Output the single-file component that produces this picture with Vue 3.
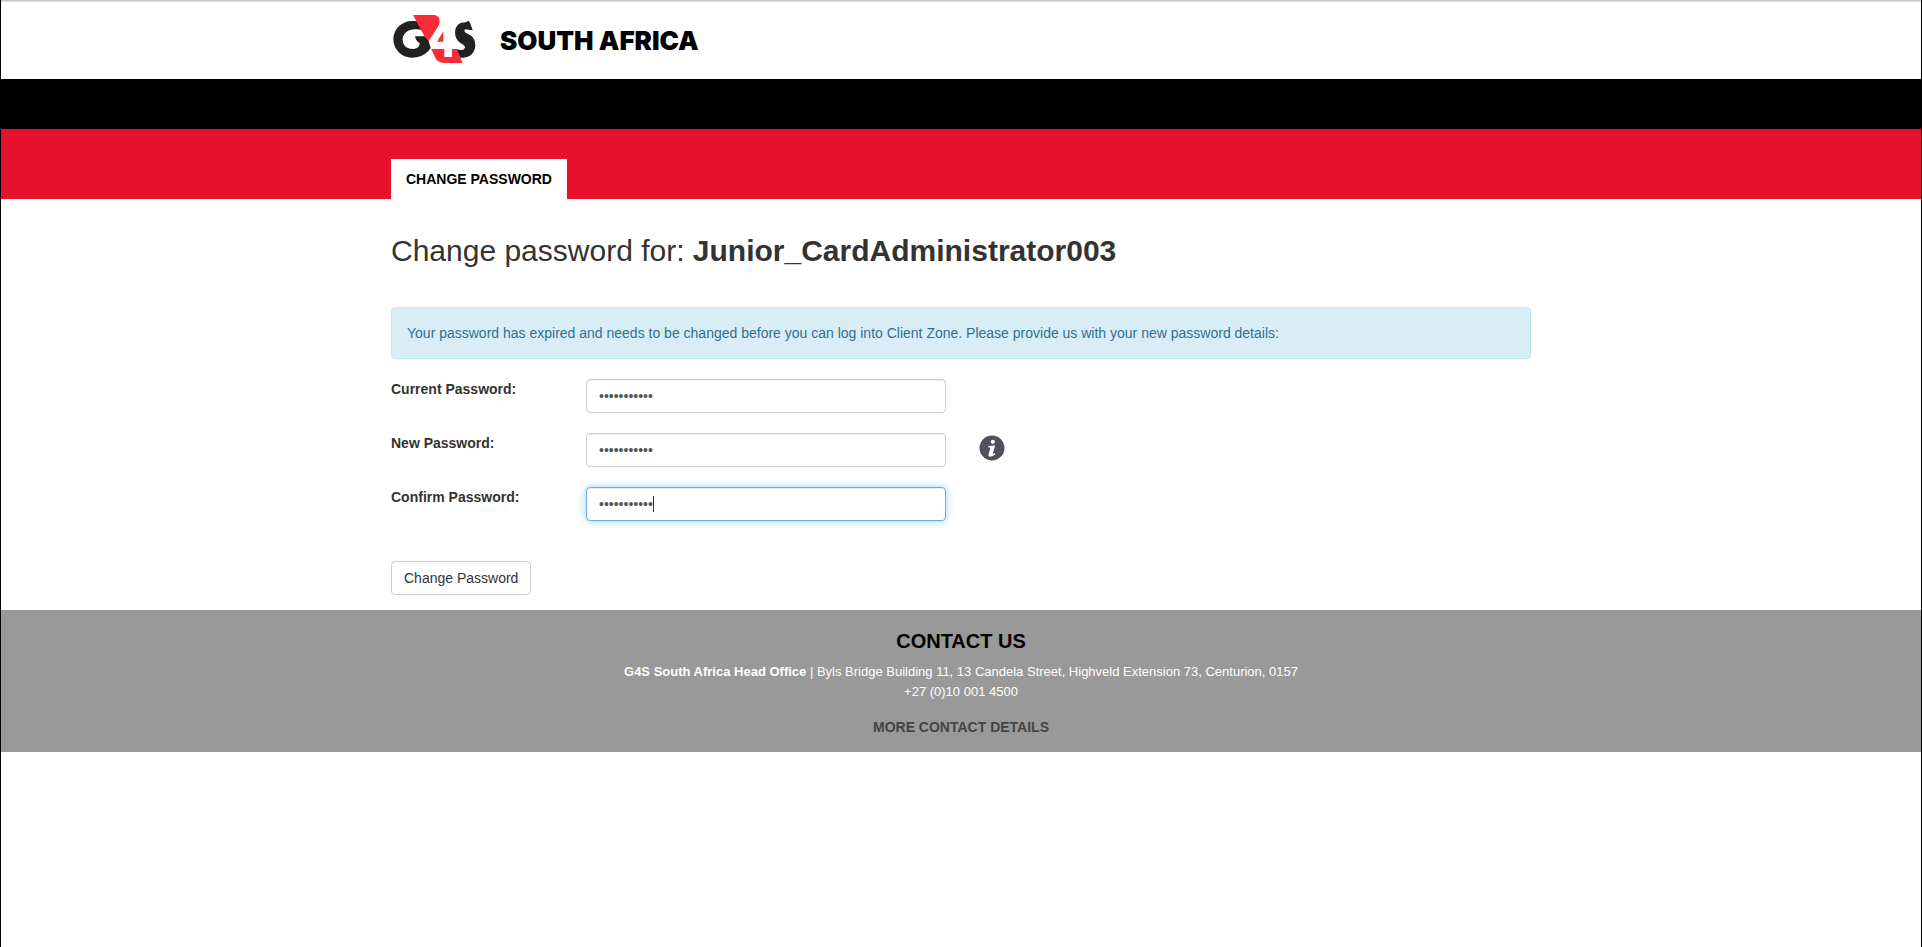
<script setup>
import { ref, onMounted } from 'vue'

const username = 'Junior_CardAdministrator003'
const current = ref('aaaaaaaaaaa')
const fresh = ref('aaaaaaaaaaa')
const confirmed = ref('aaaaaaaaaaa')
const confirmInput = ref(null)

onMounted(() => {
  const el = confirmInput.value
  el.focus()
  el.setSelectionRange(el.value.length, el.value.length)
})
</script>

<template>
  <div class="page">
    <header class="masthead">
      <div class="container brand">
        <svg class="logo" viewBox="33 36 264 156" role="img" aria-label="G4S">
          <path class="ink" d="M121 65 Q108 62 95 63 A55 55 0 0 0 95 173 Q126 173 146 152 L152 144 L146 123 L138 109 H105 Q108 124 119 129 Q119 145 101 147 Q76 147 69 128 Q64 108 79 96 Q91 86 112 88 L130 91 Z" />
          <path class="red" d="M99 45 H163 Q180 47 179 66 Q178 76 171 85 L146 123 L135 112 Z" />
          <path class="red" d="M190 94 V125 H171 Z" />
          <path class="red" d="M154 147 H193 V171 H216 V147 H229 L248 189 H192 Q172 188 165 172 Z" />
          <path class="ink" d="M265 62 Q270 64 278 91 L265 89 Q254 86 253 92 Q253 97 264 102 Q286 111 286 135 Q284 170 250 173 L241 173 L229 147 Q252 154 255 143 Q256 137 245 131 Q225 121 225 96 Q227 66 258 67 Z" />
        </svg>
        <span class="country">SOUTH AFRICA</span>
      </div>
    </header>
    <div class="strip"></div>
    <nav class="tabs">
      <div class="container">
        <a class="tab" href="#">CHANGE PASSWORD</a>
      </div>
    </nav>

    <main class="container">
      <h1>Change password for: <strong>{{ username }}</strong></h1>
      <div class="notice" role="alert">Your password has expired and needs to be changed before you can log into Client Zone. Please provide us with your new password details:</div>
      <form @submit.prevent>
        <div class="row">
          <label for="current">Current Password:</label>
          <div class="field"><input id="current" v-model="current" type="password" /></div>
        </div>
        <div class="row">
          <label for="fresh">New Password:</label>
          <div class="field"><input id="fresh" v-model="fresh" type="password" /></div>
          <svg class="info" viewBox="0 0 32 30" role="img" aria-label="Password rules">
            <circle cx="16" cy="15" r="12.5" fill="#50505a" />
            <circle cx="16.8" cy="8.8" r="2.1" fill="#fff" />
            <path d="M12.4 13 L19.2 12.4 L16.7 21.1 Q17 21.6 18.9 20.1 L19.4 20.9 Q16.5 24 13.7 23.8 Q12 23.5 12.6 21.2 L14.4 14.9 Q14.1 14.2 12.3 14.4 Z" fill="#fff" />
          </svg>
        </div>
        <div class="row">
          <label for="confirm">Confirm Password:</label>
          <div class="field">
            <input id="confirm" ref="confirmInput" v-model="confirmed" class="active" type="password" />
            <span class="caret"></span>
          </div>
        </div>
        <button type="submit">Change Password</button>
      </form>
    </main>

    <footer>
      <h2>CONTACT US</h2>
      <p><b>G4S South Africa Head Office</b> | Byls Bridge Building 11, 13 Candela Street, Highveld Extension 73, Centurion, 0157<br />+27 (0)10 001 4500</p>
      <a href="#">MORE CONTACT DETAILS</a>
    </footer>
  </div>
</template>

<style>
body {
  margin: 0;
  background: #fff;
}
</style>

<style scoped>
* {
  box-sizing: border-box;
}
.page {
  min-height: 100vh;
  border: solid #000;
  border-width: 0 1px;
  font: 14px/20px "Liberation Sans", Arial, sans-serif;
  color: #333;
}
.container {
  width: 100%;
  max-width: 1170px;
  margin: 0 auto;
  padding: 0 15px;
}
.masthead {
  height: 79px;
  box-shadow: inset 0 1px 0 #c8c8c8, inset 0 2px 0 #e4e4e4;
}
.brand {
  display: flex;
  align-items: flex-end;
  gap: 21px;
  padding-top: 12px;
}
.logo {
  width: 88px;
  height: 52px;
}
.ink {
  fill: #222;
}
.red {
  fill: #fb2b38;
}
.country {
  font: 900 26px/46px "Arial Black", Inter, sans-serif;
  color: #000;
}
.strip {
  height: 50px;
  background: #000;
}
.tabs {
  height: 70px;
  padding-top: 30px;
  background: #e8112d;
}
.tab {
  display: inline-block;
  padding: 10px 15px;
  background: #fff;
  color: #000;
  font-weight: bold;
  text-decoration: none;
}
h1 {
  margin: 35px 0 40px;
  font-size: 30px;
  line-height: 33px;
  font-weight: normal;
}
.notice {
  padding: 15px;
  margin-bottom: 20px;
  border: 1px solid #bce8f1;
  border-radius: 4px;
  background: #d9edf7;
  color: #31708f;
}
.row {
  display: grid;
  grid-template-columns: 2fr 4fr 6fr;
  align-items: start;
  margin: 0 -15px 20px;
}
label {
  padding-left: 15px;
  font-weight: bold;
}
.field {
  position: relative;
  display: flex;
  margin: 0 15px;
}
input {
  width: 100%;
  height: 34px;
  padding: 6px 12px;
  border: 1px solid #ccc;
  border-radius: 4px;
  background: #fff;
  box-shadow: inset 0 1px 1px rgba(0, 0, 0, 0.075);
  color: #555;
  font: 14px/20px "Liberation Sans", Arial, sans-serif;
  outline: 0;
}
input.active,
input:focus {
  border-color: #66afe9;
  box-shadow: inset 0 1px 1px rgba(0, 0, 0, 0.075), 0 0 8px rgba(102, 175, 233, 0.6);
}
input.active {
  caret-color: transparent;
}
.caret {
  position: absolute;
  top: 9px;
  left: 67px;
  width: 1px;
  height: 16px;
  background: #333;
}
.info {
  width: 32px;
  height: 30px;
  margin-left: 15px;
}
button {
  display: block;
  margin: 40px 0 15px;
  padding: 6px 12px;
  border: 1px solid #ccc;
  border-radius: 4px;
  background: #fff;
  color: #333;
  font: 14px/20px "Liberation Sans", Arial, sans-serif;
}
footer {
  padding: 20px 15px 15px;
  background: #999;
  color: #fff;
  text-align: center;
}
h2 {
  margin: 0 0 10px;
  font-size: 20px;
  line-height: 22px;
  color: #000;
}
p {
  margin: 0 0 15px;
  font-size: 13px;
}
footer a {
  display: inline-block;
  color: #444;
  font-weight: bold;
  text-decoration: none;
}
</style>
